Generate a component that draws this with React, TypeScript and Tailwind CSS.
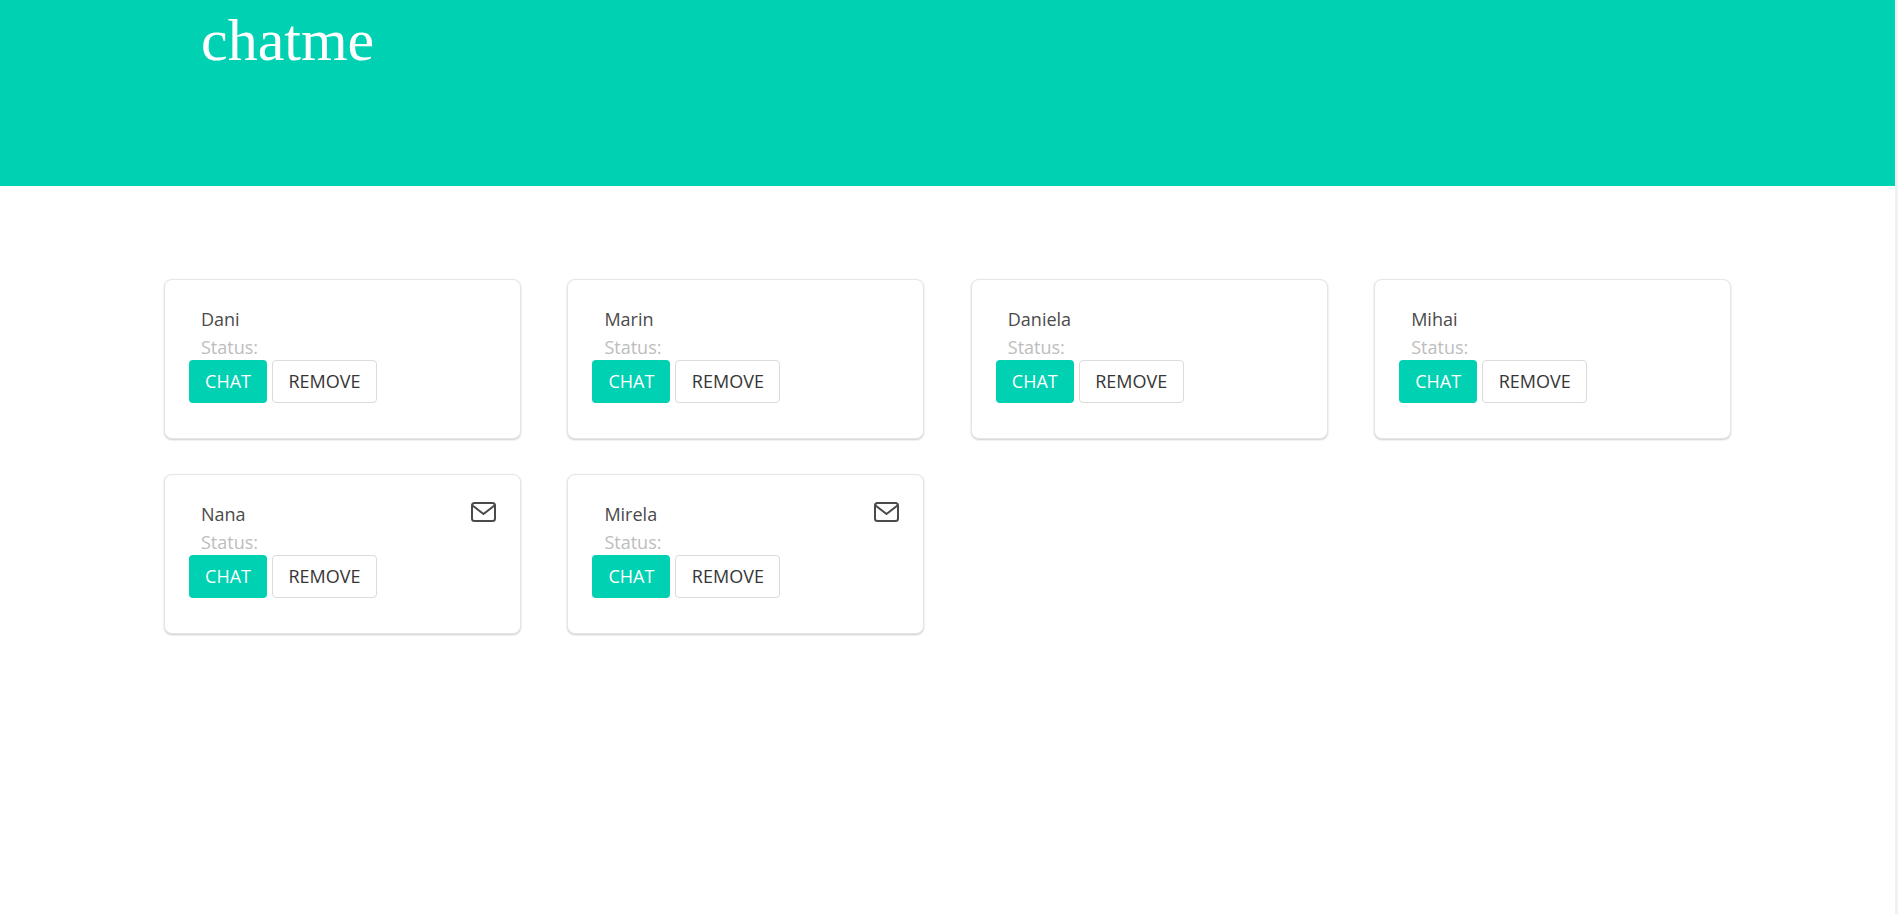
import React from 'react';

const contacts = [
  { name: 'Dani', hasMessage: false },
  { name: 'Marin', hasMessage: false },
  { name: 'Daniela', hasMessage: false },
  { name: 'Mihai', hasMessage: false },
  { name: 'Nana', hasMessage: true },
  { name: 'Mirela', hasMessage: true },
];

const MailIcon = () => (
  <svg className="mt-[1px]" width="25" height="20" viewBox="0 0 25 20" fill="none" stroke="#4a4a4a" strokeWidth="2" strokeLinejoin="round">
    <rect x="1" y="1" width="23" height="18" rx="2.5" />
    <path d="M1.5 3.5 L12.5 12 L23.5 3.5" />
  </svg>
);

const ContactCard = ({ name, hasMessage }: { name: string; hasMessage: boolean }) => (
  <div className="h-40 bg-white rounded-lg border border-[#e6e6e6] shadow-[0_1px_2px_rgba(0,0,0,0.2)] pt-[26px] pl-6 flex flex-col">
    <div className="flex justify-between pr-6 items-start h-[26px]">
      <div className="pl-3 text-[#4a4a4a] text-[18px] leading-[26px]">{name}</div>
      {hasMessage && <MailIcon />}
    </div>
    <div className="pl-3 text-[#bdbdbd] text-[18px] leading-[28px] mt-[1px] h-[27px]">Status:</div>
    <div className="flex gap-[5px]">
      <button className="h-[43px] w-[78px] bg-[#00d1b2] text-white text-[18px] rounded">CHAT</button>
      <button className="h-[43px] w-[105px] bg-white border border-[#dbdbdb] text-[#363636] text-[18px] rounded">REMOVE</button>
    </div>
  </div>
);

export default function App() {
  return (
    <div className="flex min-h-[914px] bg-white font-['Open_Sans','Noto_Sans',sans-serif]">
      <div className="flex-1">
        <header className="h-[186px] bg-[#00d1b2] pl-[201px]">
          <h1 className="font-['Liberation_Serif',serif] text-white text-[60px] leading-[80px]">chatme</h1>
        </header>
        <main className="pl-[164px] pt-[93px] grid grid-cols-[repeat(4,357px)] gap-x-[46.4px] gap-y-[35px]">
          {contacts.map((c) => (
            <ContactCard key={c.name} name={c.name} hasMessage={c.hasMessage} />
          ))}
        </main>
      </div>
      <div className="w-[3px] bg-[#f1f1f1]" />
    </div>
  );
}
